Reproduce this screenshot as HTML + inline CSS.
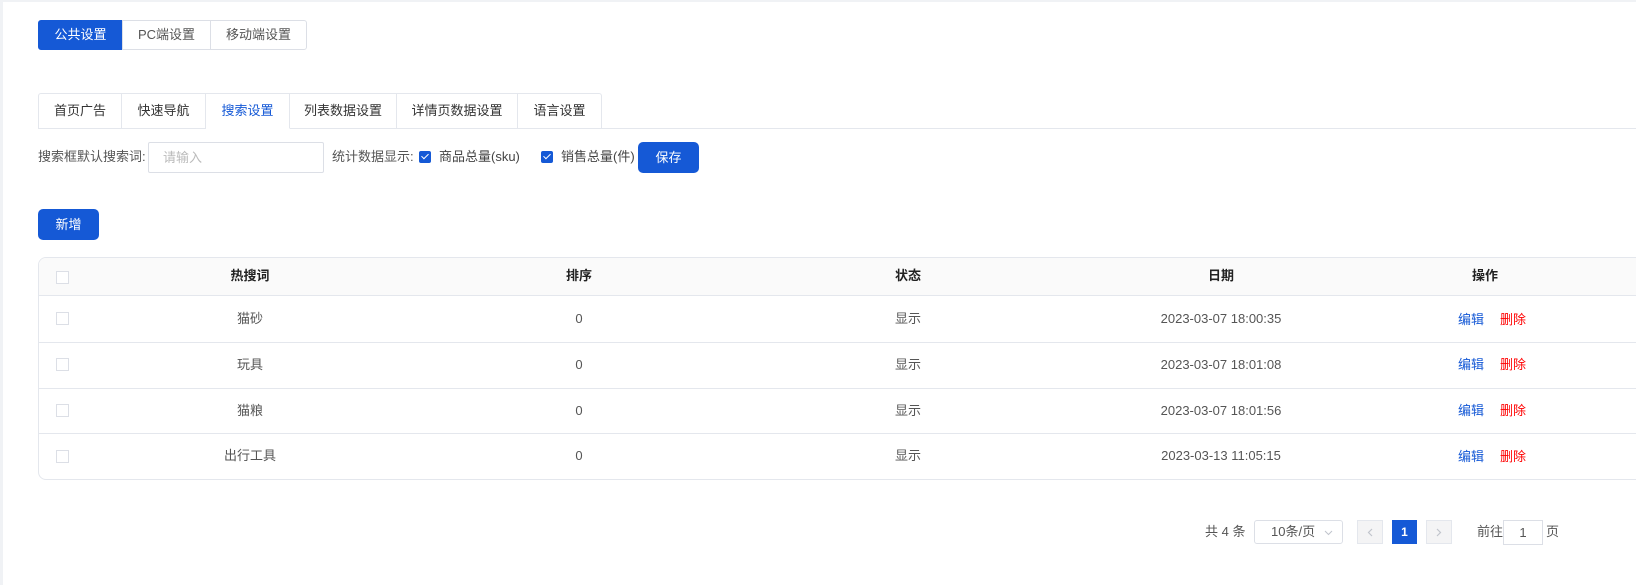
<!DOCTYPE html>
<html><head><meta charset="utf-8"><style>
*{box-sizing:border-box;margin:0;padding:0}
body{width:1636px;height:585px;background:#f0f2f5;font-family:"Liberation Sans","Noto Sans CJK SC",sans-serif;font-size:13px;line-height:16px;color:#333;overflow:hidden;position:relative}
.main{position:absolute;left:3px;top:2px;right:0;bottom:0;background:#fff}
.a{position:absolute;white-space:nowrap}
.seg{position:absolute;top:20px;height:30px;border:1px solid #dcdfe6;display:flex;align-items:center;justify-content:center;color:#555;font-size:13px}
.tab{position:absolute;top:93px;height:36px;border:1px solid #e4e7ed;border-left:none;display:flex;align-items:center;justify-content:center;color:#333;font-size:13px;background:#fff}
.btn{position:absolute;background:#1559d6;color:#fff;border-radius:5px;display:flex;align-items:center;justify-content:center;font-size:13px}
.cb{position:absolute;width:13px;height:13px;border:1px solid #dcdfe6;background:#fff}
.cbc{position:absolute;width:12px;height:12px;background:#1559d6;border-radius:2px}
.cbc:after{content:"";position:absolute;left:4px;top:1px;width:3px;height:6px;border:solid #fff;border-width:0 1.5px 1.5px 0;transform:rotate(45deg)}
.c{position:absolute;transform:translateX(-50%);white-space:nowrap;color:#555}
.hl{position:absolute;left:38px;right:0;height:1px;background:#e4e7ed}
.pb{position:absolute;top:520px;height:24px;border:1px solid #dcdfe6;display:flex;align-items:center;justify-content:center;font-size:12px}
</style></head><body>
<div class="main"></div>
<div class="seg" style="left:38px;width:85px;background:#1559d6;border-color:#1559d6;color:#fff;border-radius:3px 0 0 3px">公共设置</div>
<div class="seg" style="left:122px;width:89px">PC端设置</div>
<div class="seg" style="left:210px;width:97px;border-radius:0 3px 3px 0">移动端设置</div>

<div class="hl" style="top:128px"></div>
<div class="tab" style="left:38px;width:84px;border-left:1px solid #e4e7ed;border-radius:3px 0 0 0">首页广告</div>
<div class="tab" style="left:122px;width:84px">快速导航</div>
<div class="tab" style="left:206px;width:84px;color:#1559d6;border-bottom-color:#fff">搜索设置</div>
<div class="tab" style="left:290px;width:107px">列表数据设置</div>
<div class="tab" style="left:397px;width:121px">详情页数据设置</div>
<div class="tab" style="left:518px;width:84px;border-radius:0 3px 0 0">语言设置</div>

<div class="a" style="left:38px;top:149px;color:#555">搜索框默认搜索词:</div>
<div class="a" style="left:148px;top:142px;width:176px;height:31px;border:1px solid #dcdfe6;border-radius:2px;color:#bbb;padding-left:14px;display:flex;align-items:center">请输入</div>
<div class="a" style="left:332px;top:149px;color:#555">统计数据显示:</div>
<div class="cbc" style="left:419px;top:151px"></div>
<div class="a" style="left:439px;top:149px;color:#444">商品总量(sku)</div>
<div class="cbc" style="left:541px;top:151px"></div>
<div class="a" style="left:561px;top:149px;color:#444">销售总量(件)</div>
<div class="btn" style="left:638px;top:142px;width:61px;height:31px">保存</div>
<div class="btn" style="left:38px;top:209px;width:61px;height:31px">新增</div>

<div class="a" style="left:38px;top:257px;width:1620px;height:223px;border:1px solid #e4e7ed;border-radius:8px;overflow:hidden">
<div style="height:38px;background:#fafafa;border-bottom:1px solid #e4e7ed"></div>
</div>
<div class="hl" style="top:342px;left:39px"></div>
<div class="hl" style="top:388px;left:39px"></div>
<div class="hl" style="top:433px;left:39px"></div>

<div class="cb" style="left:56px;top:271px"></div>
<div class="c" style="left:250px;top:268px;color:#222;font-weight:bold">热搜词</div>
<div class="c" style="left:579px;top:268px;color:#222;font-weight:bold">排序</div>
<div class="c" style="left:908px;top:268px;color:#222;font-weight:bold">状态</div>
<div class="c" style="left:1221px;top:268px;color:#222;font-weight:bold">日期</div>
<div class="c" style="left:1485px;top:268px;color:#222;font-weight:bold">操作</div>

<div class="cb" style="left:56px;top:312px"></div>
<div class="c" style="left:250px;top:311px">猫砂</div><div class="c" style="left:579px;top:311px">0</div><div class="c" style="left:908px;top:311px">显示</div><div class="c" style="left:1221px;top:311px">2023-03-07 18:00:35</div>
<div class="a" style="left:1458px;top:312px;color:#1559d6">编辑</div><div class="a" style="left:1500px;top:312px;color:#f00">删除</div>

<div class="cb" style="left:56px;top:358px"></div>
<div class="c" style="left:250px;top:357px">玩具</div><div class="c" style="left:579px;top:357px">0</div><div class="c" style="left:908px;top:357px">显示</div><div class="c" style="left:1221px;top:357px">2023-03-07 18:01:08</div>
<div class="a" style="left:1458px;top:357px;color:#1559d6">编辑</div><div class="a" style="left:1500px;top:357px;color:#f00">删除</div>

<div class="cb" style="left:56px;top:404px"></div>
<div class="c" style="left:250px;top:403px">猫粮</div><div class="c" style="left:579px;top:403px">0</div><div class="c" style="left:908px;top:403px">显示</div><div class="c" style="left:1221px;top:403px">2023-03-07 18:01:56</div>
<div class="a" style="left:1458px;top:403px;color:#1559d6">编辑</div><div class="a" style="left:1500px;top:403px;color:#f00">删除</div>

<div class="cb" style="left:56px;top:450px"></div>
<div class="c" style="left:250px;top:448px">出行工具</div><div class="c" style="left:579px;top:448px">0</div><div class="c" style="left:908px;top:448px">显示</div><div class="c" style="left:1221px;top:448px">2023-03-13 11:05:15</div>
<div class="a" style="left:1458px;top:449px;color:#1559d6">编辑</div><div class="a" style="left:1500px;top:449px;color:#f00">删除</div>

<div class="a" style="left:1205px;top:524px;color:#555">共 4 条</div>
<div class="pb" style="left:1254px;width:89px;border-radius:3px;justify-content:flex-start;padding-left:16px;color:#555;font-size:13px">10条/页<svg style="position:absolute;right:9px;top:9px" width="9" height="6" viewBox="0 0 9 6"><path d="M1 1l3.5 3.5L8 1" fill="none" stroke="#c0c4cc" stroke-width="1"/></svg></div>
<div class="pb" style="left:1357px;width:26px;background:#f4f4f5;color:#bbb;border-color:#e4e7ed"><svg width="6" height="9" viewBox="0 0 6 9"><path d="M5 1L1.5 4.5 5 8" fill="none" stroke="#c0c4cc" stroke-width="1.2"/></svg></div>
<div class="pb" style="left:1392px;width:25px;background:#1559d6;color:#fff;border-color:#1559d6;font-weight:bold">1</div>
<div class="pb" style="left:1426px;width:26px;background:#f4f4f5;color:#bbb;border-color:#e4e7ed"><svg width="6" height="9" viewBox="0 0 6 9"><path d="M1 1l3.5 3.5L1 8" fill="none" stroke="#c0c4cc" stroke-width="1.2"/></svg></div>
<div class="a" style="left:1477px;top:524px;color:#555">前往</div>
<div class="pb" style="left:1503px;width:40px;top:520px;height:25px;font-size:13px;color:#555">1</div>
<div class="a" style="left:1546px;top:524px;color:#555">页</div>
</body></html>
